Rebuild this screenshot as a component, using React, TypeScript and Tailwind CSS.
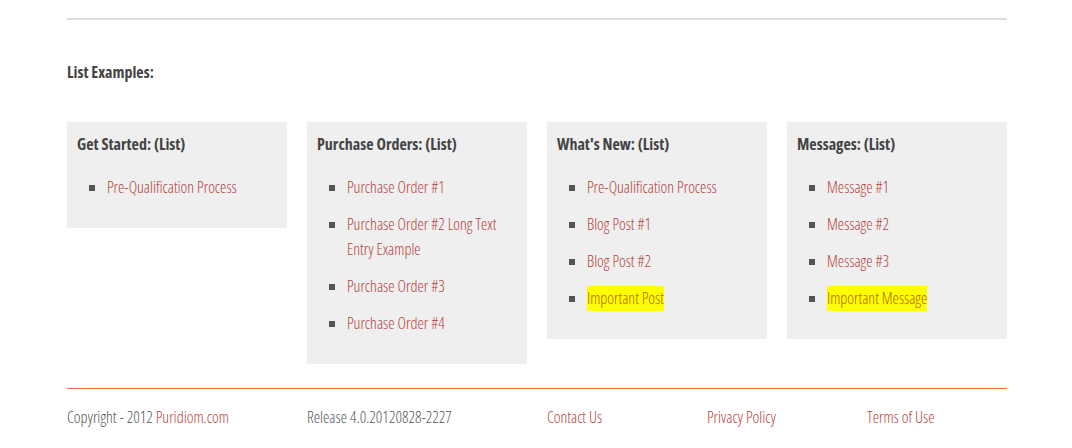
const lists = [
  {
    title: "Get Started: (List)",
    items: [{ label: "Pre-Qualification Process" }],
  },
  {
    title: "Purchase Orders: (List)",
    items: [
      { label: "Purchase Order #1" },
      { label: "Purchase Order #2 Long Text Entry Example" },
      { label: "Purchase Order #3" },
      { label: "Purchase Order #4" },
    ],
  },
  {
    title: "What's New: (List)",
    items: [
      { label: "Pre-Qualification Process" },
      { label: "Blog Post #1" },
      { label: "Blog Post #2" },
      { label: "Important Post", highlight: true },
    ],
  },
  {
    title: "Messages: (List)",
    items: [
      { label: "Message #1" },
      { label: "Message #2" },
      { label: "Message #3" },
      { label: "Important Message", highlight: true },
    ],
  },
];

const font = "font-['Open_Sans',sans-serif] [font-stretch:75%]";

export default function App() {
  return (
    <div className={`bg-white w-[1072px] h-[448px] overflow-hidden ${font}`}>
      <div className="w-[940px] ml-[67px] pt-[18px]">
        <div className="h-[2px] bg-[#dddddd]" />

        <h3 className="mt-[40px] text-[16px] font-bold text-[#444] leading-[24px]">
          List Examples:
        </h3>

        <div className="grid grid-cols-4 gap-5 mt-[38px] items-start">
          {lists.map((list) => (
            <div key={list.title} className="bg-[#efefef] px-[10px] pt-[10px] pb-[28px]">
              <h4 className="text-[16px] font-bold text-[#444] leading-[24px]">{list.title}</h4>
              <ul className="mt-[19px] ml-[12px] space-y-[12px]">
                {list.items.map((item) => (
                  <li key={item.label} className="flex gap-[12px] text-[16px] font-light leading-[25px]">
                    <span className="w-[6px] h-[6px] bg-[#555] mt-[10px] shrink-0" />
                    <a
                      href="#"
                      className={
                        item.highlight
                          ? "text-[#b0620a] bg-[#ffff00] self-start"
                          : "text-[#b5423b]"
                      }
                    >
                      {item.label}
                    </a>
                  </li>
                ))}
              </ul>
            </div>
          ))}
        </div>

        <div className="h-px bg-[#d9763e] mt-[24px]" />

        <div className="grid grid-cols-[240px_240px_160px_160px_140px] mt-[16px] text-[16px] font-light leading-[24px]">
          <p className="text-[#555]">
            Copyright - 2012 <a href="#" className="text-[#b5423b]">Puridiom.com</a>
          </p>
          <p className="text-[#555]">Release 4.0.20120828-2227</p>
          <a href="#" className="text-[#b5423b]">Contact Us</a>
          <a href="#" className="text-[#b5423b]">Privacy Policy</a>
          <a href="#" className="text-[#b5423b]">Terms of Use</a>
        </div>
      </div>
    </div>
  );
}
